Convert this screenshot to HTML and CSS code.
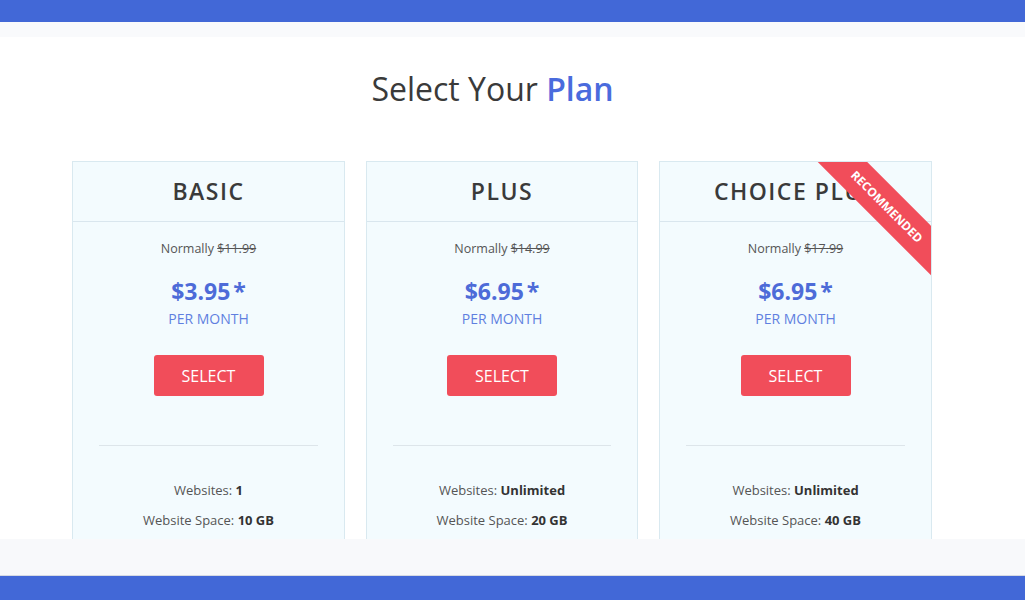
FILE: index.html
```html
<!DOCTYPE html>
<html>
<head>
<meta charset="utf-8">
<link rel="stylesheet" href="styles.css">
</head>
<body>
<div class="topbar"></div>
<div class="strip"></div>
<main class="main">
  <div class="container">
    <h1 class="title">Select Your <span class="accent">Plan</span></h1>
    <div class="plans">
      <div class="card">
        <div class="card-head">BASIC</div>
        <div class="card-body">
          <div class="normally">Normally <s>$11.99</s></div>
          <div class="price">$3.95<span class="star">*</span></div>
          <div class="per">PER MONTH</div>
          <button class="btn">SELECT</button>
          <hr class="divider">
          <div class="feature">Websites: <b>1</b></div>
          <div class="feature">Website Space: <b>10 GB</b></div>
        </div>
      </div>
      <div class="card">
        <div class="card-head">PLUS</div>
        <div class="card-body">
          <div class="normally">Normally <s>$14.99</s></div>
          <div class="price">$6.95<span class="star">*</span></div>
          <div class="per">PER MONTH</div>
          <button class="btn">SELECT</button>
          <hr class="divider">
          <div class="feature">Websites: <b>Unlimited</b></div>
          <div class="feature">Website Space: <b>20 GB</b></div>
        </div>
      </div>
      <div class="card">
        <div class="ribbon">RECOMMENDED</div>
        <div class="card-head">CHOICE PLUS</div>
        <div class="card-body">
          <div class="normally">Normally <s>$17.99</s></div>
          <div class="price">$6.95<span class="star">*</span></div>
          <div class="per">PER MONTH</div>
          <button class="btn">SELECT</button>
          <hr class="divider">
          <div class="feature">Websites: <b>Unlimited</b></div>
          <div class="feature">Website Space: <b>40 GB</b></div>
        </div>
      </div>
    </div>
  </div>
</main>
<div class="footstrip"></div>
<div class="bottombar"></div>
</body>
</html>
```
FILE: styles.css
```css
* { box-sizing: border-box; }
html, body { margin: 0; padding: 0; }
body {
  width: 1025px;
  height: 600px;
  overflow: hidden;
  display: flex;
  flex-direction: column;
  font-family: "Open Sans", "Liberation Sans", sans-serif;
  background: #ffffff;
  color: #333;
}
.topbar { height: 22px; background: #4268d7; flex: none; }
.strip { height: 15px; background: #f9fafc; flex: none; }
.main {
  height: 502px;
  flex: none;
  overflow: hidden;
  background: #fff;
}
.footstrip {
  height: 37px;
  flex: none;
  background: #f8f9fb;
  border-bottom: 1px solid #d6dae3;
}
.bottombar { flex: 1; background: #4268d7; }

.container {
  width: 861px;
  margin-left: 72px;
  padding-top: 30px;
}
.title {
  margin: 0 0 50px;
  padding-right: 20px;
  text-align: center;
  font-size: 32px;
  line-height: 44px;
  font-weight: 400;
  color: #3a3a3a;
}
.accent { color: #4a6bdd; font-weight: 600; }

.plans {
  display: flex;
  gap: 21px;
  align-items: flex-start;
}
.card {
  position: relative;
  overflow: hidden;
  width: 273px;
  height: 420px;
  background: #f3fbfe;
  border: 1px solid #d9e9f0;
  text-align: center;
}
.card:nth-child(2) { width: 272px; }
.card-head {
  height: 60px;
  border-bottom: 1px solid #d9e6ee;
  display: flex;
  align-items: center;
  justify-content: center;
  font-size: 23px;
  font-weight: 600;
  letter-spacing: 1.5px;
  color: #3a3a3a;
  padding-bottom: 2px;
}
.card-body { padding: 17px 0 0; }
.normally {
  font-size: 12.5px;
  line-height: 20px;
  color: #555;
}
.normally s { color: #555; }
.price {
  margin-top: 16px;
  font-size: 23px;
  line-height: 32px;
  font-weight: 700;
  color: #4d6bd8;
}
.star { margin-left: 3px; }
.per {
  margin-top: 2px;
  font-size: 14px;
  line-height: 20px;
  color: #5f7fe0;
}
.btn {
  display: block;
  margin: 26px auto 0;
  width: 110px;
  height: 41px;
  border: none;
  border-radius: 3px;
  background: #f14d5a;
  color: #fff;
  font-family: inherit;
  font-size: 16px;
  padding: 0;
}
.divider {
  margin: 49px 26px 0;
  border: none;
  border-top: 1px solid #dde5ea;
  height: 0;
}
.feature {
  font-size: 13px;
  line-height: 20px;
  color: #555;
  margin-top: 10px;
}
.divider + .feature { margin-top: 34px; }
.feature b { color: #333; font-weight: 700; }

.ribbon {
  position: absolute;
  top: 27px;
  right: -56px;
  width: 200px;
  height: 35px;
  line-height: 35px;
  transform: rotate(45deg);
  background: #f14d5a;
  color: #fff;
  font-size: 12px;
  font-weight: 700;
  text-align: center;
  z-index: 2;
}
```
